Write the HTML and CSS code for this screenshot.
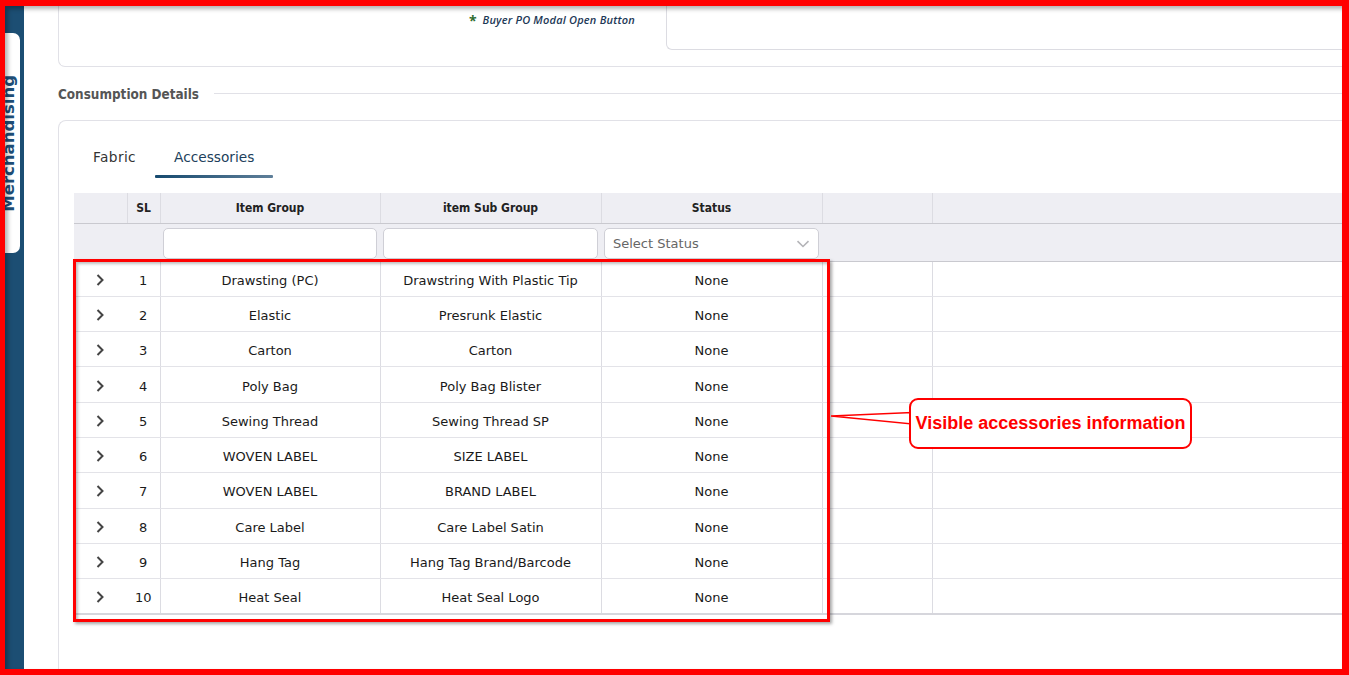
FILE: index.html
```html
<!DOCTYPE html>
<html lang="en">
<head>
<meta charset="utf-8">
<title>Consumption Details</title>
<link rel="stylesheet" href="styles.css">
</head>
<body>
<div class="app">
  <aside class="sidebar">
    <div class="side-tab"><span class="side-text">Merchandising</span></div>
  </aside>
  <main class="main">
    <section class="card card-top">
      <div class="po-label"><span class="star">*</span><em class="po-text">Buyer PO Modal Open Button</em></div>
      <div class="po-box"></div>
    </section>

    <div class="section-title"><span class="section-name">Consumption Details</span><span class="section-line"></span></div>

    <section class="card card-cons">
      <nav class="tabs">
        <span class="tab">Fabric</span>
        <span class="tab active">Accessories</span>
      </nav>

      <table class="grid">
        <colgroup>
          <col class="c-exp"><col class="c-sl"><col class="c-grp"><col class="c-sub"><col class="c-st"><col class="c-empty"><col>
        </colgroup>
        <thead>
          <tr class="head">
            <th class="h-exp"></th><th>SL</th><th>Item Group</th><th>item Sub Group</th><th>Status</th><th></th><th class="h-last"></th>
          </tr>
          <tr class="filter">
            <td></td><td></td>
            <td class="f-cell"><div class="f-input"></div></td>
            <td class="f-cell"><div class="f-input"></div></td>
            <td class="f-cell"><div class="f-input f-select"><span class="f-ph">Select Status</span><svg class="f-chev" width="14" height="8" viewBox="0 0 14 8"><path d="M1.5 1.2 L7 6.5 L12.5 1.2" fill="none" stroke="#b4b4b8" stroke-width="1.6"/></svg></div></td>
            <td></td><td></td>
          </tr>
        </thead>
        <tbody>
          <tr><td class="exp"><svg width="10" height="14" viewBox="0 0 10 14"><path d="M2.5 2 L7.5 7 L2.5 12" fill="none" stroke="#444" stroke-width="2"/></svg></td><td class="sl">1</td><td>Drawsting (PC)</td><td>Drawstring With Plastic Tip</td><td>None</td><td></td><td class="last"></td></tr>
          <tr><td class="exp"><svg width="10" height="14" viewBox="0 0 10 14"><path d="M2.5 2 L7.5 7 L2.5 12" fill="none" stroke="#444" stroke-width="2"/></svg></td><td class="sl">2</td><td>Elastic</td><td>Presrunk Elastic</td><td>None</td><td></td><td class="last"></td></tr>
          <tr><td class="exp"><svg width="10" height="14" viewBox="0 0 10 14"><path d="M2.5 2 L7.5 7 L2.5 12" fill="none" stroke="#444" stroke-width="2"/></svg></td><td class="sl">3</td><td>Carton</td><td>Carton</td><td>None</td><td></td><td class="last"></td></tr>
          <tr><td class="exp"><svg width="10" height="14" viewBox="0 0 10 14"><path d="M2.5 2 L7.5 7 L2.5 12" fill="none" stroke="#444" stroke-width="2"/></svg></td><td class="sl">4</td><td>Poly Bag</td><td>Poly Bag Blister</td><td>None</td><td></td><td class="last"></td></tr>
          <tr><td class="exp"><svg width="10" height="14" viewBox="0 0 10 14"><path d="M2.5 2 L7.5 7 L2.5 12" fill="none" stroke="#444" stroke-width="2"/></svg></td><td class="sl">5</td><td>Sewing Thread</td><td>Sewing Thread SP</td><td>None</td><td></td><td class="last"></td></tr>
          <tr><td class="exp"><svg width="10" height="14" viewBox="0 0 10 14"><path d="M2.5 2 L7.5 7 L2.5 12" fill="none" stroke="#444" stroke-width="2"/></svg></td><td class="sl">6</td><td>WOVEN LABEL</td><td>SIZE LABEL</td><td>None</td><td></td><td class="last"></td></tr>
          <tr><td class="exp"><svg width="10" height="14" viewBox="0 0 10 14"><path d="M2.5 2 L7.5 7 L2.5 12" fill="none" stroke="#444" stroke-width="2"/></svg></td><td class="sl">7</td><td>WOVEN LABEL</td><td>BRAND LABEL</td><td>None</td><td></td><td class="last"></td></tr>
          <tr><td class="exp"><svg width="10" height="14" viewBox="0 0 10 14"><path d="M2.5 2 L7.5 7 L2.5 12" fill="none" stroke="#444" stroke-width="2"/></svg></td><td class="sl">8</td><td>Care Label</td><td>Care Label Satin</td><td>None</td><td></td><td class="last"></td></tr>
          <tr><td class="exp"><svg width="10" height="14" viewBox="0 0 10 14"><path d="M2.5 2 L7.5 7 L2.5 12" fill="none" stroke="#444" stroke-width="2"/></svg></td><td class="sl">9</td><td>Hang Tag</td><td>Hang Tag Brand/Barcode</td><td>None</td><td></td><td class="last"></td></tr>
          <tr class="end"><td class="exp"><svg width="10" height="14" viewBox="0 0 10 14"><path d="M2.5 2 L7.5 7 L2.5 12" fill="none" stroke="#444" stroke-width="2"/></svg></td><td class="sl">10</td><td>Heat Seal</td><td>Heat Seal Logo</td><td>None</td><td></td><td class="last"></td></tr>
        </tbody>
      </table>
    </section>
  </main>
</div>

<div class="highlight"></div>
<svg class="pointer" width="84" height="16" viewBox="0 0 84 16"><polygon points="1,6 82,2.5 82,14" fill="#fff" stroke="#ff0000" stroke-width="1.4"/></svg>
<div class="callout">Visible accessories information</div>
<div class="frame"></div>
</body>
</html>
```
FILE: styles.css
```css
* { box-sizing: border-box; }

html, body {
  margin: 0;
  padding: 0;
  width: 1349px;
  height: 675px;
  overflow: hidden;
  background: #ffffff;
  font-family: "DejaVu Sans", "Open Sans", sans-serif;
  color: #222;
}

.app {
  display: flex;
  height: 675px;
}

/* ---------- sidebar ---------- */
.sidebar {
  flex: none;
  width: 24px;
  background: #1c4e73;
  padding-top: 33px;
}

.side-tab {
  width: 20px;
  height: 220px;
  background: #fff;
  border-radius: 0 7px 7px 0;
  display: flex;
  align-items: center;
  justify-content: flex-start;
  overflow: hidden;
}

.side-text {
  writing-mode: vertical-rl;
  transform: rotate(180deg);
  font-family: "DejaVu Sans", sans-serif;
  font-weight: 700;
  font-size: 16.5px;
  line-height: 18px;
  color: #1e4f78;
  margin-left: 0;
  white-space: nowrap;
}

/* ---------- main ---------- */
.main {
  flex: 1;
  min-width: 0;
  padding-left: 34px;
  display: flex;
  flex-direction: column;
}

.card {
  border: 1px solid #e1e1e7;
  border-right: 0;
  background: #fff;
}

.card-top {
  flex: none;
  height: 67px;
  border-top: 0;
  border-radius: 0 0 0 7px;
  display: flex;
}

.po-label {
  flex: none;
  width: 607px;
  text-align: right;
  padding-right: 31px;
  padding-top: 12px;
  font-family: "Open Sans", sans-serif;
  font-size: 11px;
  line-height: 16px;
}

.star {
  color: #2f6d2f;
  font-weight: 700;
  font-size: 14px;
  margin-right: 6px;
  vertical-align: -2px;
}

.po-text {
  font-style: italic;
  font-weight: 600;
  letter-spacing: 0.2px;
  color: #1d3856;
}

.po-box {
  flex: 1;
  height: 50px;
  border: 1px solid #dcdce2;
  border-top: 0;
  border-right: 0;
  border-radius: 0 0 0 6px;
}

.section-title {
  flex: none;
  height: 53px;
  display: flex;
  align-items: center;
  gap: 15px;
}

.section-name {
  font-family: "DejaVu Sans Condensed", "DejaVu Sans", sans-serif;
  font-stretch: condensed;
  font-weight: 700;
  font-size: 13.4px;
  color: #555;
  white-space: nowrap;
  padding-top: 1px;
}

.section-line {
  flex: 1;
  height: 1px;
  background: #e1e1e7;
}

.card-cons {
  flex: 1;
  border-bottom: 0;
  border-radius: 8px 0 0 0;
  padding: 18px 0 0 15px;
}

/* ---------- tabs ---------- */
.tabs {
  display: flex;
  margin-bottom: 15px;
}

.tab {
  position: relative;
  padding: 8px 19px 11px;
  font-size: 13.7px;
  line-height: 20px;
  color: #333;
}

.tab:first-child { padding: 8px 19px 11px 19px; letter-spacing: 0.4px; }

.tab.active {
  color: #213f5c;
}

.tab.active::after {
  content: "";
  position: absolute;
  left: 0;
  right: 0;
  bottom: 0;
  height: 3px;
  background: linear-gradient(90deg, #164a6f, #5f7f99);
  border-radius: 1px;
}

/* ---------- table ---------- */
.grid {
  width: 1275px;
  border-collapse: collapse;
  table-layout: fixed;
  font-size: 13px;
}

.c-exp { width: 53px; }
.c-sl { width: 33px; }
.c-grp { width: 220px; }
.c-sub { width: 221px; }
.c-st { width: 221px; }
.c-empty { width: 110px; }

.head th {
  height: 30px;
  padding: 1px 0 0;
  background: #eeeef3;
  border-right: 1px solid #dcdce2;
  border-bottom: 1px solid #c9c9cf;
  font-family: "DejaVu Sans Condensed", "DejaVu Sans", sans-serif;
  font-stretch: condensed;
  font-weight: 700;
  font-size: 12px;
  color: #222;
  text-align: center;
}

.head th.h-last { border-right: 0; }

.filter td {
  height: 38px;
  padding: 4px 3px 2px;
  background: #eeeef3;
  border-bottom: 1px solid #c9c9cf;
}

.f-input {
  height: 31px;
  background: #fff;
  border: 1px solid #cfcfd6;
  border-radius: 5px;
}

.f-select {
  display: flex;
  align-items: center;
  justify-content: space-between;
  padding: 0 8px 0 8px;
}

.f-ph {
  font-size: 13px;
  color: #666;
}

.f-chev { margin-top: 1px; }

tbody td {
  height: 35.3px;
  padding: 0;
  padding-top: 3px;
  text-align: center;
  color: #1a1a1a;
  border-right: 1px solid #dcdce2;
  border-bottom: 1px solid #e3e3e8;
}

tbody td.exp {
  border-right: 0;
  padding-top: 2px;
}

tbody td.exp svg {
  display: block;
  margin: 0 auto;
  position: relative;
  left: -1px;
}

tbody td.last { border-right: 0; }

tbody tr.end td { border-bottom: 2px solid #d6d6dc; }

/* ---------- annotations ---------- */
.highlight {
  position: absolute;
  left: 73px;
  top: 259px;
  width: 757px;
  height: 363px;
  border: 3px solid #ff0000;
  box-shadow: 2px 2px 3px rgba(0, 0, 0, 0.35), inset 2px 2px 3px rgba(0, 0, 0, 0.25);
  pointer-events: none;
}

.pointer {
  position: absolute;
  left: 830px;
  top: 410px;
}

.callout {
  position: absolute;
  left: 909px;
  top: 398px;
  width: 283px;
  height: 51px;
  border: 2px solid #ff0000;
  border-radius: 9px;
  background: #fff;
  display: flex;
  align-items: center;
  justify-content: center;
  font-family: "Liberation Sans", Arial, sans-serif;
  font-weight: 700;
  font-size: 18px;
  color: #ff0000;
  white-space: nowrap;
}

.frame {
  position: fixed;
  left: 0;
  top: 0;
  width: 1349px;
  height: 675px;
  border-style: solid;
  border-color: #ff0000;
  border-width: 6px 7px 6px 5px;
  box-shadow: inset 3px 3px 4px rgba(0, 0, 0, 0.3);
  pointer-events: none;
}
```
